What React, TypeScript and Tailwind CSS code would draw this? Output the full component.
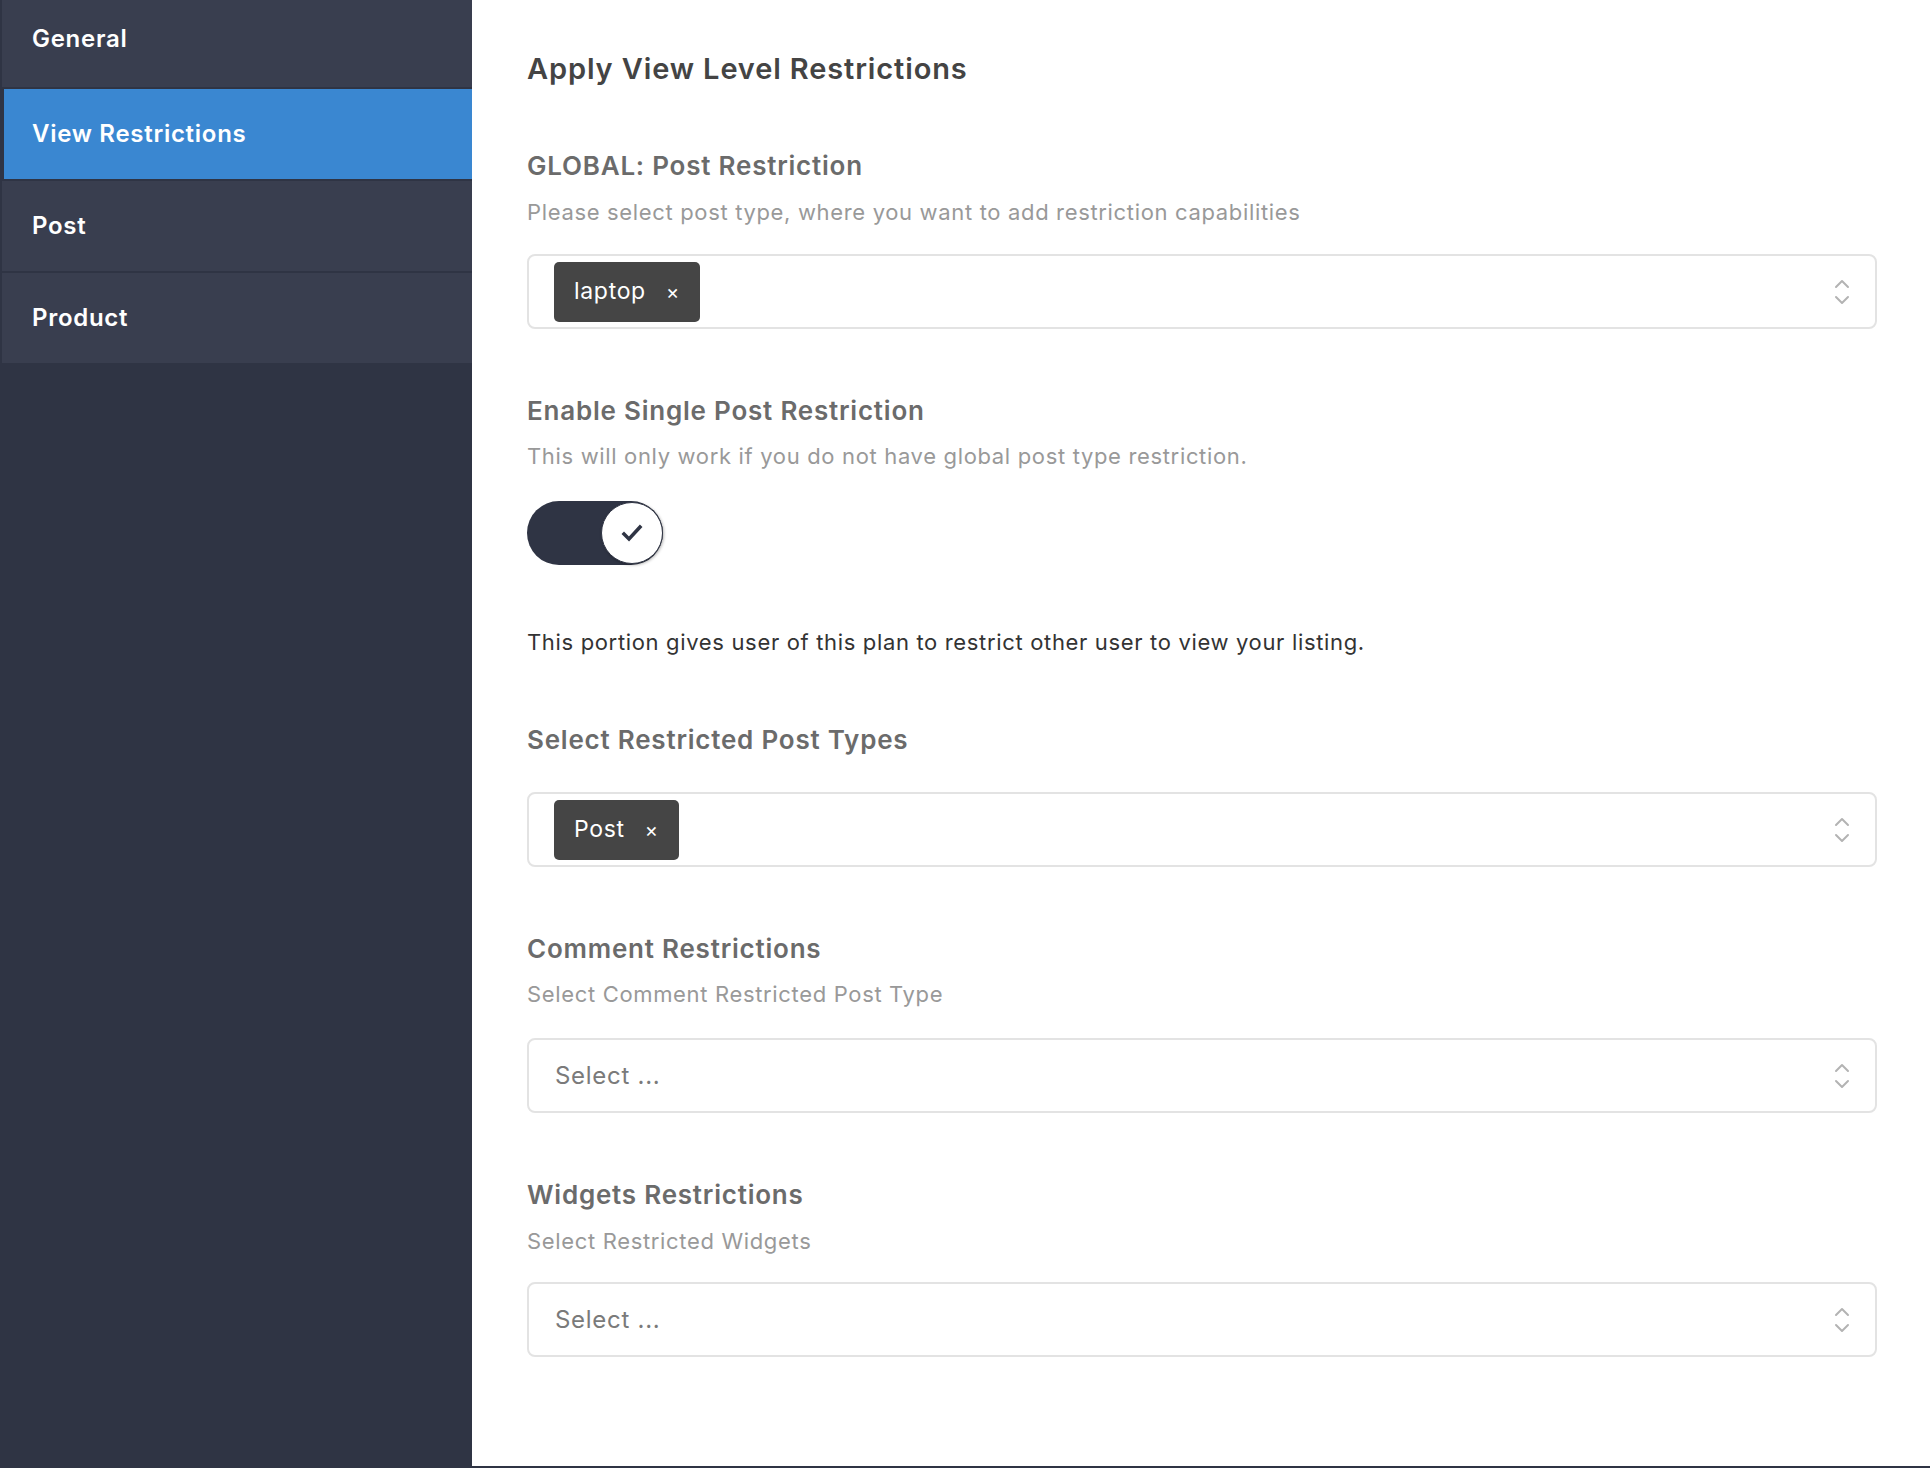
import React from 'react'

const navItems = ['General', 'View Restrictions', 'Post', 'Product']

function Chevrons() {
    return (
        <svg width="18" height="30" viewBox="0 0 18 30" fill="none" stroke="#b3b3b3" strokeWidth="2" strokeLinecap="round" strokeLinejoin="round">
            <path d="M3 10 L9 4 L15 10" />
            <path d="M3 20 L9 26 L15 20" />
        </svg>
    )
}

function SelectBox({ tag }: { tag?: string }) {
    return (
        <div className="h-[75px] rounded-[8px] border-2 border-[#e3e3e3] bg-white flex items-center pl-[25px] pr-[24px]">
            <div className="flex-1 flex items-center">
                {tag ? (
                    <span className="h-[60px] rounded-[5px] bg-[#454545] text-white text-[23px] tracking-[0.03em] flex items-center pl-[20px] pr-[20px]">
                        {tag}
                        <span className="ml-[20px] text-[20px]">×</span>
                    </span>
                ) : (
                    <span className="ml-[1px] text-[24px] tracking-[0.03em] text-[#7a7a7a]">Select ...</span>
                )}
            </div>
            <Chevrons />
        </div>
    )
}

function Toggle() {
    return (
        <div className="w-[136px] h-[64px] rounded-full bg-[#2f3444] flex items-center justify-end">
            <div className="w-[62px] h-[62px] rounded-full bg-white border border-[#2f3444] shadow-[1px_1px_3px_rgba(0,0,0,0.3)] flex items-center justify-center">
                <svg width="22" height="18" viewBox="0 0 22 18" fill="none" stroke="#2f3444" strokeWidth="3.5" strokeLinecap="square">
                    <path d="M3 10 L8 15 L19 3" />
                </svg>
            </div>
        </div>
    )
}

const label = 'text-[26px] leading-[32px] font-semibold tracking-[0.03em] text-[#6b6b6b]'
const desc = 'text-[22px] leading-[28px] tracking-[0.03em] text-[#999999]'

export default function App() {
    return (
        <div className="w-[1930px] h-[1468px] flex border-l-2 border-b-2 border-[#2f3444] bg-white font-['Inter',sans-serif] overflow-hidden">
            <aside className="w-[470px] shrink-0 bg-[#2f3444] flex flex-col gap-[2px]">
                {navItems.map((item, i) => (
                    <div
                        key={item}
                        className={
                            (i === 1 ? 'bg-[#3a87d1] ml-[2px] pl-[28px] ' : 'bg-[#393e4f] pl-[30px] ') +
                            (i === 0 ? 'h-[87px] pb-[9px] ' : 'h-[90px] ') +
                            'flex items-center text-white text-[24px] font-semibold tracking-[0.03em]'
                        }
                    >
                        {item}
                    </div>
                ))}
            </aside>

            <main className="flex-1 pl-[55px] pr-[53px] pt-[51px]">
                <h1 className="text-[29px] leading-[36px] font-semibold tracking-[0.03em] text-[#444444]">Apply View Level Restrictions</h1>

                <h2 className={'mt-[63px] ' + label}>GLOBAL: Post Restriction</h2>
                <p className={'mt-[16px] ' + desc}>
                    Please select post type, where you want to add restriction capabilities
                </p>
                <div className="mt-[28px]">
                    <SelectBox tag="laptop" />
                </div>

                <h2 className={'mt-[66px] ' + label}>Enable Single Post Restriction</h2>
                <p className={'mt-[15px] ' + desc}>
                    This will only work if you do not have global post type restriction.
                </p>
                <div className="mt-[31px]">
                    <Toggle />
                </div>

                <p className="mt-[63px] text-[22px] leading-[28px] tracking-[0.03em] text-[#333333]">
                    This portion gives user of this plan to restrict other user to view your listing.
                </p>

                <h2 className={'mt-[68px] ' + label}>Select Restricted Post Types</h2>
                <div className="mt-[36px]">
                    <SelectBox tag="Post" />
                </div>

                <h2 className={'mt-[66px] ' + label}>Comment Restrictions</h2>
                <p className={'mt-[15px] ' + desc}>Select Comment Restricted Post Type</p>
                <div className="mt-[30px]">
                    <SelectBox />
                </div>

                <h2 className={'mt-[66px] ' + label}>Widgets Restrictions</h2>
                <p className={'mt-[16px] ' + desc}>Select Restricted Widgets</p>
                <div className="mt-[27px]">
                    <SelectBox />
                </div>
            </main>
        </div>
    )
}
